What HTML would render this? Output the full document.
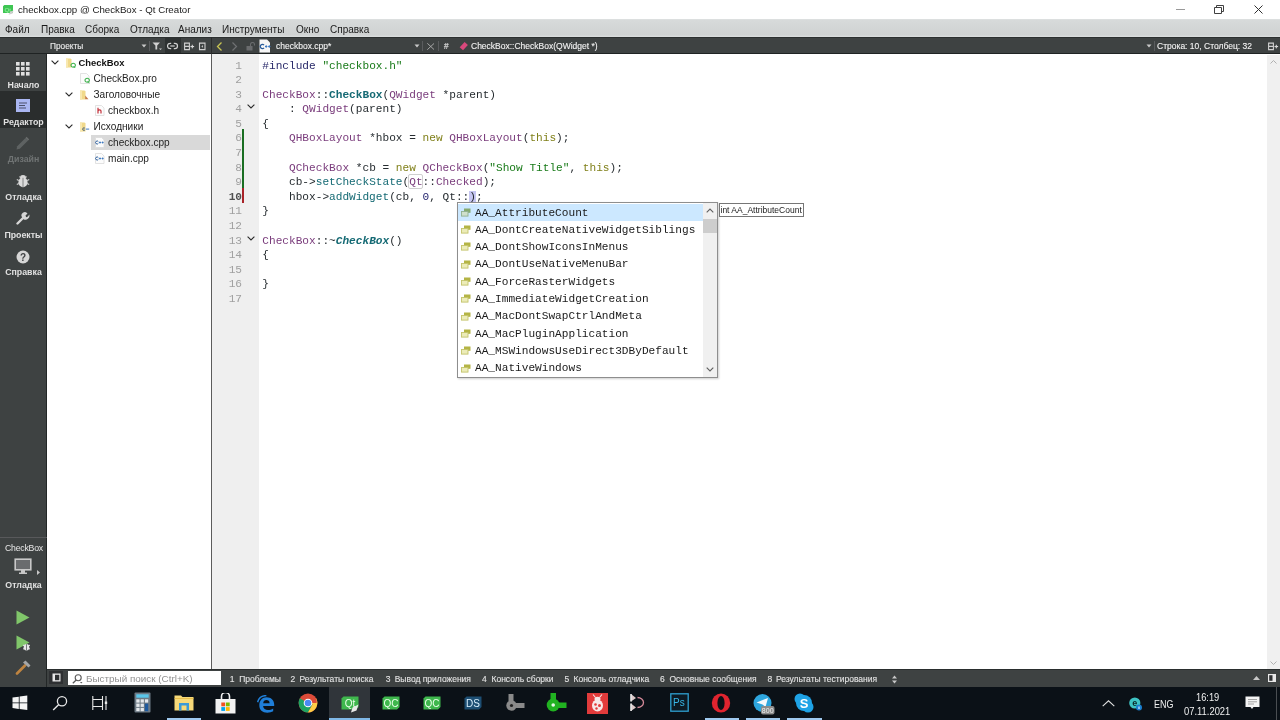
<!DOCTYPE html>
<html><head><meta charset="utf-8">
<style>
*{margin:0;padding:0;box-sizing:border-box}
html,body{width:1280px;height:720px;overflow:hidden;background:#fff;font-family:"Liberation Sans",sans-serif;position:relative}
body{will-change:transform}
.a{position:absolute;white-space:pre}
#title{left:0;top:0;width:1280px;height:19px;background:#fff}
#menu{left:0;top:19px;width:1280px;height:18px;background:linear-gradient(#dfe2e2 0,#d7dada 8%,#cfd2d2 88%,#dcdfdf 100%)}
#menu span{position:absolute;top:4.5px;font-size:10px;color:#1a1a1a}
#tb{left:0;top:37px;width:1280px;height:17px;background:#3e4242;box-shadow:inset 0 1px 0 #2c3030,inset 0 -1px 0 #1f2323}
#mode{left:0;top:54px;width:47px;height:633px;background:#3e4242;box-shadow:inset -1px 0 0 #232727}
#tree{left:47px;top:54px;width:164px;height:616px;background:#fff}
#vsep{left:211px;top:54px;width:1px;height:615px;background:#5c5c5c}
#gutter{left:212px;top:54px;width:47px;height:616px;background:#efefef}
#code{left:259px;top:54px;width:1008px;height:616px;background:#fff}
#vscroll{left:1267px;top:55px;width:13px;height:614px;background:#f0f0f0}
#obar{left:47px;top:669px;width:1233px;height:18px;background:#3e4242;box-shadow:inset 0 1px 0 #2a2e2e}
#task{left:0;top:687px;width:1280px;height:33px;background:#0b1117}
.code{font-family:"Liberation Mono",monospace;font-size:11.1px;line-height:14.6px}
.ln{position:absolute;right:0;width:30px;text-align:right;color:#9a9a9a}

.ed{position:absolute;font-family:"Liberation Mono",monospace;font-size:11.14px;line-height:14.6px;white-space:pre;color:#262c30}
#lnums{left:212px;top:58.5px;width:30px;text-align:right;color:#a0a0a0}
#lines{left:262.3px;top:58.5px}
.pp{color:#2a2a6a}.st{color:#187a18}.ty{color:#7a3c7c}.fn{color:#156a74}.kw{color:#80801a}.nm{color:#24246e}.b{font-weight:bold}.i{font-style:italic}

.ml{position:absolute;left:0;width:47px;text-align:center;font-size:8.8px;font-weight:bold;color:#e0e0e0}

.tr{position:absolute;font-size:10.1px;color:#1e1e1e;white-space:pre}

#pop{left:457px;top:202px;width:261px;height:176px;background:#fff;border:1px solid #8e8e8e;box-shadow:1px 1px 2px rgba(0,0,0,0.2)}
#pop .it{position:absolute;left:17px;font-family:"Liberation Mono",monospace;font-size:11.14px;line-height:17.33px;white-space:pre;color:#1a1a1a}

.ob{position:absolute;top:4px;font-size:8.5px;color:#e2e2e2;white-space:pre}

#tb span,.ob{-webkit-text-stroke:0.12px currentColor}
</style></head><body>
<div id="title" class="a">
<svg class="a" style="left:3px;top:5px" width="11" height="10" viewBox="0 0 11 10"><path d="M1.3 0H10V8H0V1.3Z" fill="#3ec553"/><text x="1.5" y="6.6" font-size="6.2" font-family="Liberation Sans" fill="#9ff5a8">Qt</text><path d="M5.5 9.5L7.5 6.5L10.5 5.5L9.5 8.5L6.5 9.6Z" fill="#cfcfcf"/></svg>
<span class="a" style="left:18px;top:4.2px;font-size:9.7px;color:#1a1a1a">checkbox.cpp @ CheckBox - Qt Creator</span>
<div class="a" style="left:1176px;top:9px;width:9px;height:1px;background:#999"></div>
<svg class="a" style="left:1214px;top:5px" width="10" height="9" viewBox="0 0 10 9"><path d="M0.5 2.5H7.5V8.5H0.5Z M2.5 2.5V0.5H9.5V6.5H7.5" fill="none" stroke="#404040" stroke-width="1"/></svg>
<svg class="a" style="left:1254px;top:5px" width="9" height="9" viewBox="0 0 9 9"><path d="M0.5 0.5L8.5 8.5M8.5 0.5L0.5 8.5" stroke="#303030" stroke-width="1"/></svg>
</div>
<div id="menu" class="a">
<span style="left:5px">Файл</span><span style="left:41px">Правка</span><span style="left:85px">Сборка</span><span style="left:130px">Отладка</span><span style="left:178px">Анализ</span><span style="left:222px">Инструменты</span><span style="left:296px">Окно</span><span style="left:330px">Справка</span>
</div>
<div id="tb" class="a">
<span class="a" style="left:50px;top:3.5px;font-size:8.3px;color:#ececec">Проекты</span>
<svg class="a" style="left:141px;top:7px" width="6" height="4"><path d="M0.5 0.5H5.5L3 3.5Z" fill="#c8c8c8"/></svg>
<div class="a" style="left:149px;top:4px;width:1px;height:10px;background:#5a5c5e"></div>
<svg class="a" style="left:152px;top:5px" width="11" height="9" viewBox="0 0 11 9"><path d="M0.5 0.5H8L5.2 3.6V7.5H3.4V3.6Z" fill="#d0d0d0"/><path d="M7 6.5H10L8.5 8Z" fill="#d0d0d0"/></svg>
<div class="a" style="left:165px;top:1px;width:15.5px;height:15px;background:#2d3131"></div>
<svg class="a" style="left:167px;top:5px" width="12" height="8" viewBox="0 0 12 8"><path d="M4.2 1.3H3.2A2.7 2.7 0 0 0 3.2 6.7H4.2M6.8 1.3H7.8A2.7 2.7 0 0 1 7.8 6.7H6.8" fill="none" stroke="#d0d0d0" stroke-width="1.2"/><path d="M3.3 4H7.7" stroke="#c8c8c8" stroke-width="1.3"/></svg>
<svg class="a" style="left:183px;top:5px" width="12" height="9" viewBox="0 0 12 9"><path d="M1.6 1.1H6.4V7.6H1.6Z M1.6 4.35H6.4" fill="none" stroke="#d0d0d0" stroke-width="1.1"/><rect x="7.5" y="4" width="3.6" height="1.1" fill="#d8d8d8"/><rect x="8.75" y="2.75" width="1.1" height="3.6" fill="#d8d8d8"/></svg>
<svg class="a" style="left:198px;top:5px" width="8" height="9" viewBox="0 0 8 9"><path d="M1.5 1.1H7V7.6H1.5Z" fill="none" stroke="#d0d0d0" stroke-width="1.1"/><path d="M5 3V5.8L3.3 4.4Z" fill="#c0c0c0"/></svg>
<div class="a" style="left:211px;top:0;width:1px;height:17px;background:#2a2b2c"></div>
<svg class="a" style="left:216px;top:5px" width="7" height="9" viewBox="0 0 7 9"><path d="M5.5 0.5L1.5 4.5L5.5 8.5" fill="none" stroke="#c9c552" stroke-width="1.3"/></svg>
<svg class="a" style="left:231px;top:5px" width="7" height="9" viewBox="0 0 7 9"><path d="M1.5 0.5L5.5 4.5L1.5 8.5" fill="none" stroke="#707274" stroke-width="1.2"/></svg>
<svg class="a" style="left:246px;top:5px" width="10" height="9" viewBox="0 0 10 9"><rect x="0.5" y="4" width="6" height="4.5" fill="#6a6c6e"/><path d="M4.5 4.2V2.5A2 2 0 0 1 8.5 2.5V3.5" fill="none" stroke="#6a6c6e" stroke-width="1.1"/></svg>
<svg class="a" style="left:259px;top:2px" width="13" height="14" viewBox="0 0 13 14"><path d="M0.5 0.5H8L11 3.5V13.5H0.5Z" fill="#f6f6f6"/><path d="M5 6.2A2.1 2.1 0 1 0 5 8.8" fill="none" stroke="#2a5c9a" stroke-width="1.3"/><path d="M6 7.5H8.4M7.2 6.3V8.7M9.1 7.5H11.5M10.3 6.3V8.7" stroke="#3c78c0" stroke-width="1.1"/></svg>
<span class="a" style="left:276px;top:3.5px;font-size:8.5px;color:#f2f2f2">checkbox.cpp*</span>
<svg class="a" style="left:414px;top:7px" width="6" height="4"><path d="M0.5 0.5H5.5L3 3.5Z" fill="#c8c8c8"/></svg>
<div class="a" style="left:422px;top:4px;width:1px;height:10px;background:#5a5c5e"></div>
<svg class="a" style="left:426.7px;top:5.5px" width="7.5" height="7" viewBox="0 0 7.5 7"><path d="M0.3 0.3L7.2 6.7M7.2 0.3L0.3 6.7" stroke="#b0b0b0" stroke-width="0.9"/></svg>
<div class="a" style="left:438px;top:4px;width:1px;height:10px;background:#5a5c5e"></div>
<span class="a" style="left:443.8px;top:3.6px;font-size:8.6px;color:#d4d4d4;font-weight:bold;font-style:italic">#</span>
<svg class="a" style="left:459px;top:4px" width="10" height="10" viewBox="0 0 10 10"><path d="M0.7 6.2L5.6 1L8.9 4.1L4 9.3Z" fill="#d9487c"/></svg>
<span class="a" style="left:471px;top:3.5px;font-size:8.5px;color:#f2f2f2">CheckBox::CheckBox(QWidget *)</span>
<svg class="a" style="left:1146px;top:7px" width="6" height="4"><path d="M0.5 0.5H5.5L3 3.5Z" fill="#c8c8c8"/></svg>
<div class="a" style="left:1154px;top:4px;width:1px;height:10px;background:#5a5c5e"></div>
<span class="a" style="left:1157px;top:3.5px;font-size:8.5px;color:#f2f2f2">Строка: 10, Столбец: 32</span>
<svg class="a" style="left:1267px;top:5px" width="12" height="9" viewBox="0 0 12 9"><path d="M1.6 1.1H6.4V7.6H1.6Z M1.6 4.35H6.4" fill="none" stroke="#d0d0d0" stroke-width="1.1"/><rect x="7.5" y="4" width="3.6" height="1.1" fill="#d8d8d8"/><rect x="8.75" y="2.75" width="1.1" height="3.6" fill="#d8d8d8"/></svg>
</div>
<div id="mode" class="a">
<svg class="a" style="left:16px;top:7.8px" width="14" height="14" viewBox="0 0 14 14"><rect x="0" y="0" width="3.6" height="3.6" fill="#e0e0e0"/><rect x="0" y="5" width="3.6" height="3.6" fill="#e0e0e0"/><rect x="0" y="10" width="3.6" height="3.6" fill="#e0e0e0"/><rect x="5" y="0" width="3.6" height="3.6" fill="#e0e0e0"/><rect x="5" y="5" width="3.6" height="3.6" fill="#e0e0e0"/><rect x="5" y="10" width="3.6" height="3.6" fill="#e0e0e0"/><rect x="10" y="0" width="3.6" height="3.6" fill="#e0e0e0"/><rect x="10" y="5" width="3.6" height="3.6" fill="#e0e0e0"/><rect x="10" y="10" width="3.6" height="3.6" fill="#e0e0e0"/></svg>
<div class="ml" style="top:25.5px">Начало</div>
<div class="a" style="left:0;top:37px;width:46px;height:37px;background:#2a2d2d"></div>
<svg class="a" style="left:16px;top:45px" width="14" height="13" viewBox="0 0 14 13"><rect x="0" y="0" width="14" height="13" fill="#aab6f2"/><path d="M3 4H11M3 6.5H9M3 9H10" stroke="#4a4f6a" stroke-width="1.2"/></svg>
<div class="ml" style="top:63px">Редактор</div>
<svg class="a" style="left:13.8px;top:82px" width="16" height="15" viewBox="0 0 16 15"><path d="M2.5 13.5L3.2 10.2L11.5 1.9L14.1 4.5L5.8 12.8Z" fill="#5e6262"/><path d="M11.5 1.9L12.6 0.8L15.2 3.4L14.1 4.5Z" fill="#6a6e6e"/></svg>
<div class="ml" style="top:99.8px;color:#707474">Дизайн</div>
<svg class="a" style="left:16px;top:119px" width="14" height="15" viewBox="0 0 14 15"><path d="M0.8 6.5L2.8 7.5M0.8 11.5L2.8 10.5M13.2 6.5L11.2 7.5M13.2 11.5L11.2 10.5M3.5 3.5L4.8 4.8M10.5 3.5L9.2 4.8" stroke="#d0d0d0" stroke-width="1.1"/><ellipse cx="7" cy="4" rx="2.8" ry="2" fill="#d8d8d8"/><ellipse cx="7" cy="9.3" rx="4.6" ry="5" fill="#dcdcdc"/><path d="M7 4.8V14.2" stroke="#8a8c8c" stroke-width="1.1"/></svg>
<div class="ml" style="top:138px">Отладка</div>
<svg class="a" style="left:16px;top:157px" width="14" height="14" viewBox="0 0 14 14"><path d="M1.5 12.5L7 7" stroke="#d6d6d6" stroke-width="2.4" stroke-linecap="round"/><path d="M6.2 6.5A3.3 3.3 0 1 1 11.5 2.5L9.5 4.5L10.2 6.2L11.9 5.6L13.3 3.6A4 4 0 0 1 7.5 8.2Z" fill="#d6d6d6"/></svg>
<div class="ml" style="top:175.5px">Проекты</div>
<svg class="a" style="left:16px;top:196px" width="14" height="14" viewBox="0 0 14 14"><circle cx="7" cy="7" r="6.5" fill="#d6d6d6"/><text x="7" y="10.8" text-anchor="middle" font-size="10" font-weight="bold" font-family="Liberation Sans" fill="#404244">?</text></svg>
<div class="ml" style="top:213px">Справка</div>
<div class="a" style="left:0;top:483px;width:47px;height:1px;background:#58595b"></div>
<div class="ml" style="top:489.2px;left:0.5px;font-weight:normal;font-size:8.7px;color:#e8e8e8;letter-spacing:-0.2px">CheckBox</div>
<svg class="a" style="left:14px;top:504px" width="18" height="17" viewBox="0 0 18 17"><rect x="1.2" y="1.2" width="15.6" height="10.6" fill="#6a6c6e" stroke="#c8c8c8" stroke-width="1.6"/><path d="M7 12V14.5H5V16H13V14.5H11V12Z" fill="#c8c8c8"/></svg>
<svg class="a" style="left:37px;top:515.5px" width="3" height="5"><path d="M0 0L3 2.5L0 5Z" fill="#c8c8c8"/></svg>
<div class="ml" style="top:525.5px">Отладка</div>
<svg class="a" style="left:16px;top:556px" width="14" height="15" viewBox="0 0 14 15"><path d="M0.5 0.5L13.5 7.5L0.5 14.5Z" fill="#80c66a"/></svg>
<svg class="a" style="left:16px;top:581px" width="15" height="16" viewBox="0 0 15 16"><path d="M0.5 0.5L13.5 7.5L0.5 14.5Z" fill="#80c66a"/><path d="M7 10L8.5 11M7 14L8.5 13.5M14 10L12.5 11M14 14L12.5 13.5" stroke="#e8e8e8" stroke-width="1"/><ellipse cx="10.5" cy="12.3" rx="2.8" ry="3.3" fill="#e8e8e8"/><path d="M10.5 9.2V15.5" stroke="#6a6e6e" stroke-width="0.9"/></svg>
<svg class="a" style="left:15px;top:606px" width="17" height="15" viewBox="0 0 17 15"><path d="M2 13.5L10 5.5" stroke="#bf8440" stroke-width="2.6" stroke-linecap="round"/><path d="M8 2.5L10.5 0.5L15.5 5.5L13.5 7.5Z" fill="#a4a6a8"/></svg>
</div>
<div id="tree" class="a">
<div class="a" style="left:44px;top:80.5px;width:119px;height:15px;background:#d9d9d9"></div>
<svg class="a" style="left:3.5px;top:6px" width="8" height="5" viewBox="0 0 8 5"><path d="M0.6 0.6L4 4L7.4 0.6" fill="none" stroke="#2a2a2a" stroke-width="1.1"/></svg>
<svg class="a" style="left:18.5px;top:4px" width="10" height="10" viewBox="0 0 10 10"><path d="M0 0.5H4.5L5.5 1.5V9.5H0Z" fill="#f1d98a"/><path d="M0 0.5H2V9.5H0Z" fill="#f8e8b0"/><path d="M5 7.2A2.2 2 0 1 1 9.4 7.2A2.2 2 0 1 1 5 7.2Z" fill="none" stroke="#3fb34f" stroke-width="1.1"/><path d="M7.5 8.5L9.5 10" stroke="#3fb34f" stroke-width="1"/></svg>
<div class="tr" style="left:31.5px;top:2.5px;font-weight:bold;font-size:9.4px;color:#111">CheckBox</div>
<svg class="a" style="left:33px;top:19px" width="10" height="11" viewBox="0 0 10 11"><path d="M0.5 0.5H6.5L9 3V10.5H0.5Z" fill="#fcfcfc" stroke="#dadada" stroke-width="0.8"/><path d="M5 7.2A2.2 2 0 1 1 9.4 7.2A2.2 2 0 1 1 5 7.2Z" fill="none" stroke="#3fb34f" stroke-width="1.1"/><path d="M7.5 8.5L9.5 10" stroke="#3fb34f" stroke-width="1"/></svg>
<div class="tr" style="left:46.5px;top:18.5px">CheckBox.pro</div>
<svg class="a" style="left:18px;top:38px" width="8" height="5" viewBox="0 0 8 5"><path d="M0.6 0.6L4 4L7.4 0.6" fill="none" stroke="#2a2a2a" stroke-width="1.1"/></svg>
<svg class="a" style="left:33px;top:36px" width="10" height="10" viewBox="0 0 10 10"><path d="M0 0.5H4.5L5.5 1.5V9.5H0Z" fill="#f1d98a"/><path d="M0 0.5H2V9.5H0Z" fill="#f8e8b0"/><path d="M5.2 5.5L8.5 9.2H5.2Z" fill="#c47a4a"/></svg>
<div class="tr" style="left:46.5px;top:34.5px">Заголовочные</div>
<svg class="a" style="left:48px;top:51px" width="10" height="11" viewBox="0 0 10 11"><path d="M0.5 0.5H6.5L9 3V10.5H0.5Z" fill="#fcfcfc" stroke="#dadada" stroke-width="0.8"/><path d="M3 2.8V8.5M3 5.8Q3.2 4.8 4.6 4.8Q6 4.8 6 6V8.5" fill="none" stroke="#c4303a" stroke-width="1.2"/></svg>
<div class="tr" style="left:61px;top:50.5px">checkbox.h</div>
<svg class="a" style="left:18px;top:70px" width="8" height="5" viewBox="0 0 8 5"><path d="M0.6 0.6L4 4L7.4 0.6" fill="none" stroke="#2a2a2a" stroke-width="1.1"/></svg>
<svg class="a" style="left:33px;top:68px" width="10" height="10" viewBox="0 0 10 10"><path d="M0 0.5H4.5L5.5 1.5V9.5H0Z" fill="#f1d98a"/><path d="M0 0.5H2V9.5H0Z" fill="#f8e8b0"/><path d="M4.9 6.2A1.3 1.3 0 1 0 4.9 8" fill="none" stroke="#3a5a80" stroke-width="0.9"/><path d="M5.8 7.1H9.2" stroke="#3c78c0" stroke-width="1"/></svg>
<div class="tr" style="left:46.5px;top:66.5px">Исходники</div>
<svg class="a" style="left:48px;top:83px" width="10" height="11" viewBox="0 0 10 11"><path d="M0.5 0.5H6.5L9 3V10.5H0.5Z" fill="#fcfcfc" stroke="#dadada" stroke-width="0.8"/><path d="M3.3 4.6A1.5 1.5 0 1 0 3.3 6.4" fill="none" stroke="#2a5c9a" stroke-width="1"/><path d="M4 5.5H6M5 4.5V6.5M6.6 5.5H8.6M7.6 4.5V6.5" stroke="#3c78c0" stroke-width="0.9"/></svg>
<div class="tr" style="left:61px;top:82.5px">checkbox.cpp</div>
<svg class="a" style="left:48px;top:99px" width="10" height="11" viewBox="0 0 10 11"><path d="M0.5 0.5H6.5L9 3V10.5H0.5Z" fill="#fcfcfc" stroke="#dadada" stroke-width="0.8"/><path d="M3.3 4.6A1.5 1.5 0 1 0 3.3 6.4" fill="none" stroke="#2a5c9a" stroke-width="1"/><path d="M4 5.5H6M5 4.5V6.5M6.6 5.5H8.6M7.6 4.5V6.5" stroke="#3c78c0" stroke-width="0.9"/></svg>
<div class="tr" style="left:61px;top:98.5px">main.cpp</div>
</div>
</div>
<div id="vsep" class="a"></div>
<div id="gutter" class="a"></div>
<div id="code" class="a"></div>
<div class="a" style="left:242.4px;top:129.2px;width:1.6px;height:58.5px;background:#1a6e22"></div>
<div class="a" style="left:242.4px;top:187.7px;width:1.6px;height:15.6px;background:#a82228"></div>
<svg class="a" style="left:246.5px;top:104px" width="8" height="5" viewBox="0 0 8 5"><path d="M0.6 0.6L4 4L7.4 0.6" fill="none" stroke="#2a2a2a" stroke-width="1.1"/></svg>
<svg class="a" style="left:246.5px;top:236px" width="8" height="5" viewBox="0 0 8 5"><path d="M0.6 0.6L4 4L7.4 0.6" fill="none" stroke="#2a2a2a" stroke-width="1.1"/></svg>
<div class="a" style="left:408px;top:173.5px;width:14.5px;height:15.5px;border:1px solid #cfcfcf;border-radius:2px"></div>
<div id="lnums" class="ed">1
2
3
4
5
6
7
8
9
<b style="color:#505050">10</b>
11
12
13
14
15
16
17</div>
<div id="lines" class="ed"><span class="pp">#include</span> <span class="st">"checkbox.h"</span>

<span class="ty">CheckBox</span>::<span class="fn b">CheckBox</span>(<span class="ty">QWidget</span> *parent)
    : <span class="ty">QWidget</span>(parent)
{
    <span class="ty">QHBoxLayout</span> *hbox = <span class="kw">new</span> <span class="ty">QHBoxLayout</span>(<span class="kw">this</span>);

    <span class="ty">QCheckBox</span> *cb = <span class="kw">new</span> <span class="ty">QCheckBox</span>(<span class="st">"Show Title"</span>, <span class="kw">this</span>);
    cb-&gt;<span class="fn">setCheckState</span>(<span class="ty">Qt</span>::<span class="ty">Checked</span>);
    hbox-&gt;<span class="fn">addWidget</span>(cb, <span class="nm">0</span>, Qt::<span style="background:#c6c6f2">)</span>;
}

<span class="ty">CheckBox</span>::~<span class="fn b i">CheckBox</span>()
{

}
</div>
<div id="pop" class="a">
<div class="a" style="left:0;top:0.5px;width:245px;height:17px;background:#cce8ff"></div>

<svg class="a" style="left:3px;top:4.80px" width="10" height="9" viewBox="0 0 10 9"><rect x="3" y="0.5" width="6.5" height="4.3" fill="#86aa70"/><rect x="0.5" y="3.5" width="6.5" height="4.6" fill="#cfe0cc" stroke="#90b090" stroke-width="0.9"/></svg><svg class="a" style="left:3px;top:22.13px" width="10" height="9" viewBox="0 0 10 9"><rect x="3" y="0.5" width="6.5" height="4.3" fill="#b4b444"/><rect x="0.5" y="3.5" width="6.5" height="4.6" fill="#ececb8" stroke="#c4c46a" stroke-width="0.9"/></svg><svg class="a" style="left:3px;top:39.46px" width="10" height="9" viewBox="0 0 10 9"><rect x="3" y="0.5" width="6.5" height="4.3" fill="#b4b444"/><rect x="0.5" y="3.5" width="6.5" height="4.6" fill="#ececb8" stroke="#c4c46a" stroke-width="0.9"/></svg><svg class="a" style="left:3px;top:56.79px" width="10" height="9" viewBox="0 0 10 9"><rect x="3" y="0.5" width="6.5" height="4.3" fill="#b4b444"/><rect x="0.5" y="3.5" width="6.5" height="4.6" fill="#ececb8" stroke="#c4c46a" stroke-width="0.9"/></svg><svg class="a" style="left:3px;top:74.12px" width="10" height="9" viewBox="0 0 10 9"><rect x="3" y="0.5" width="6.5" height="4.3" fill="#b4b444"/><rect x="0.5" y="3.5" width="6.5" height="4.6" fill="#ececb8" stroke="#c4c46a" stroke-width="0.9"/></svg><svg class="a" style="left:3px;top:91.45px" width="10" height="9" viewBox="0 0 10 9"><rect x="3" y="0.5" width="6.5" height="4.3" fill="#b4b444"/><rect x="0.5" y="3.5" width="6.5" height="4.6" fill="#ececb8" stroke="#c4c46a" stroke-width="0.9"/></svg><svg class="a" style="left:3px;top:108.78px" width="10" height="9" viewBox="0 0 10 9"><rect x="3" y="0.5" width="6.5" height="4.3" fill="#b4b444"/><rect x="0.5" y="3.5" width="6.5" height="4.6" fill="#ececb8" stroke="#c4c46a" stroke-width="0.9"/></svg><svg class="a" style="left:3px;top:126.11px" width="10" height="9" viewBox="0 0 10 9"><rect x="3" y="0.5" width="6.5" height="4.3" fill="#b4b444"/><rect x="0.5" y="3.5" width="6.5" height="4.6" fill="#ececb8" stroke="#c4c46a" stroke-width="0.9"/></svg><svg class="a" style="left:3px;top:143.44px" width="10" height="9" viewBox="0 0 10 9"><rect x="3" y="0.5" width="6.5" height="4.3" fill="#b4b444"/><rect x="0.5" y="3.5" width="6.5" height="4.6" fill="#ececb8" stroke="#c4c46a" stroke-width="0.9"/></svg><svg class="a" style="left:3px;top:160.77px" width="10" height="9" viewBox="0 0 10 9"><rect x="3" y="0.5" width="6.5" height="4.3" fill="#b4b444"/><rect x="0.5" y="3.5" width="6.5" height="4.6" fill="#ececb8" stroke="#c4c46a" stroke-width="0.9"/></svg><div class="it" style="top:1.5px">AA_AttributeCount<br>AA_DontCreateNativeWidgetSiblings<br>AA_DontShowIconsInMenus<br>AA_DontUseNativeMenuBar<br>AA_ForceRasterWidgets<br>AA_ImmediateWidgetCreation<br>AA_MacDontSwapCtrlAndMeta<br>AA_MacPluginApplication<br>AA_MSWindowsUseDirect3DByDefault<br>AA_NativeWindows</div>
<div class="a" style="left:245px;top:0;width:14px;height:174px;background:#f0f0f0"></div>
<div class="a" style="left:245px;top:15.5px;width:14px;height:14px;background:#cdcdcd"></div>
<svg class="a" style="left:248px;top:5px" width="8" height="5" viewBox="0 0 8 5"><path d="M0.7 4.3L4 1L7.3 4.3" fill="none" stroke="#606060" stroke-width="1.1"/></svg>
<svg class="a" style="left:248px;top:164px" width="8" height="5" viewBox="0 0 8 5"><path d="M0.7 0.7L4 4L7.3 0.7" fill="none" stroke="#606060" stroke-width="1.1"/></svg>
</div>
<div class="a" style="left:719px;top:203px;width:85px;height:14px;background:#fff;border:1px solid #767676"></div>
<span class="a" style="left:720.5px;top:204.5px;font-size:8.5px;color:#1a1a1a">int AA_AttributeCount</span>
<div id="vscroll" class="a">
<svg class="a" style="left:3px;top:5px" width="7" height="4" viewBox="0 0 7 4"><path d="M0.5 3.5L3.5 0.5L6.5 3.5" fill="none" stroke="#b0b0b0" stroke-width="1"/></svg>
<svg class="a" style="left:3px;top:605.5px" width="7" height="4" viewBox="0 0 7 4"><path d="M0.5 0.5L3.5 3.5L6.5 0.5" fill="none" stroke="#b0b0b0" stroke-width="1"/></svg>
</div>
<div id="obar" class="a"><div class="a" style="left:0;top:1px;width:1233px;height:17px">
<div class="a" style="left:2px;top:1px;width:14px;height:13px;background:#2e3032"></div>
<svg class="a" style="left:4.5px;top:3px" width="9" height="9" viewBox="0 0 9 9"><rect x="0.5" y="0.5" width="8" height="8" fill="#e8e8e8"/><rect x="3" y="1.8" width="4.3" height="5.4" fill="#2e3032"/></svg>
<div class="a" style="left:21px;top:1px;width:153px;height:14px;background:#fff"></div>
<svg class="a" style="left:25px;top:3.5px" width="11" height="10" viewBox="0 0 11 10"><circle cx="6.2" cy="3.8" r="3" fill="none" stroke="#5a5a5a" stroke-width="1.1"/><path d="M4.2 6L0.8 9.2" stroke="#5a5a5a" stroke-width="1.3"/><path d="M8 8H10.5L9.25 9.5Z" fill="#5a5a5a"/></svg>
<span class="a" style="left:39px;top:2.5px;font-size:9.9px;color:#909090">Быстрый поиск (Ctrl+K)</span>
<span class="ob" style="left:182.7px">1</span><span class="ob" style="left:192.2px">Проблемы</span><span class="ob" style="left:243.6px">2</span><span class="ob" style="left:252.4px">Результаты поиска</span><span class="ob" style="left:338.8px">3</span><span class="ob" style="left:347.7px">Вывод приложения</span><span class="ob" style="left:435.1px">4</span><span class="ob" style="left:444.5px">Консоль сборки</span><span class="ob" style="left:517.6px">5</span><span class="ob" style="left:526.5px">Консоль отладчика</span><span class="ob" style="left:613.1px">6</span><span class="ob" style="left:622.5px">Основные сообщения</span><span class="ob" style="left:720.4px">8</span><span class="ob" style="left:728.9px">Результаты тестирования</span>
<svg class="a" style="left:844.5px;top:5px" width="5" height="9" viewBox="0 0 5 9"><path d="M0 3.5L2.5 0.5L5 3.5Z M0 5.5L2.5 8.5L5 5.5Z" fill="#c8c8c8"/></svg>
<svg class="a" style="left:1206px;top:6px" width="7" height="4" viewBox="0 0 7 4"><path d="M0 4L3.5 0L7 4Z" fill="#c8c8c8"/></svg>
<svg class="a" style="left:1221px;top:4px" width="8" height="8" viewBox="0 0 8 8"><rect x="0.6" y="0.6" width="6.8" height="6.8" fill="#2e3032" stroke="#e8e8e8" stroke-width="1.2"/><rect x="4.5" y="1" width="3" height="6" fill="#e8e8e8"/></svg>
</div></div>
<div id="task" class="a">
<svg class="a" style="left:12px;top:8px" width="16" height="16" viewBox="0 0 16 16"><path d="M0.5 2.6L6.8 1.7V7.4H0.5Z M7.6 1.6L15.3 0.6V7.4H7.6Z M0.5 8.2H6.8V13.9L0.5 13Z M7.6 8.2H15.3V15L7.6 14Z" fill="#f4f4f4"/></svg>
<svg class="a" style="left:52px;top:8px" width="16" height="16" viewBox="0 0 16 16"><circle cx="10" cy="6.2" r="4.6" fill="none" stroke="#e8e8e8" stroke-width="1.3"/><path d="M6.8 9.5L1.2 15" stroke="#e8e8e8" stroke-width="1.4"/></svg>
<svg class="a" style="left:92px;top:8px" width="16" height="16" viewBox="0 0 16 16"><path d="M0.8 1V15M10.5 1V15M0.8 4.5H10.5M0.8 11.5H10.5M14 1V15" stroke="#e8e8e8" stroke-width="1.1" fill="none"/><rect x="12.8" y="6.5" width="2.4" height="2.5" fill="#e8e8e8"/></svg>
<svg class="a" style="left:134px;top:5px" width="17" height="21" viewBox="0 0 17 21"><rect x="0.5" y="0.5" width="16" height="20" rx="1" fill="#6d7a85"/><rect x="2.3" y="2.3" width="12.4" height="3.4" fill="#5ac6ea"/><rect x="2.3" y="7.3" width="3.3" height="3.3" fill="#e4e8ec"/><rect x="6.6" y="7.3" width="3.3" height="3.3" fill="#e4e8ec"/><rect x="2.3" y="11.6" width="3.3" height="3.3" fill="#e4e8ec"/><rect x="6.6" y="11.6" width="3.3" height="3.3" fill="#e4e8ec"/><rect x="2.3" y="15.899999999999999" width="3.3" height="3.3" fill="#e4e8ec"/><rect x="6.6" y="15.899999999999999" width="3.3" height="3.3" fill="#e4e8ec"/><rect x="10.9" y="7.3" width="3.3" height="3.3" fill="#e4e8ec"/><rect x="10.9" y="11.6" width="3.3" height="7.6" fill="#1f5a9e"/></svg>
<svg class="a" style="left:174px;top:7px" width="20" height="17" viewBox="0 0 20 17"><path d="M0.5 1.5H7L8.5 3H19.5V16.5H0.5Z" fill="#f6d979"/><path d="M0.5 4.5H19.5" stroke="#e4b840" stroke-width="0.8"/><path d="M5 9H15V16.5H12.5V11.5H7.5V16.5H5Z" fill="#3a9ad8"/></svg>
<div class="a" style="left:167px;top:31px;width:34px;height:2px;background:#9fc9ef"></div>
<svg class="a" style="left:215px;top:6px" width="21" height="21" viewBox="0 0 21 21"><path d="M6.5 6V3.5A4 4 0 0 1 14.5 3.5V6" fill="none" stroke="#f0f0f0" stroke-width="1.6"/><rect x="0.5" y="6" width="20" height="14.5" fill="#f2f2f2"/><rect x="6.3" y="9.5" width="3.8" height="3.8" fill="#f25022"/><rect x="10.9" y="9.5" width="3.8" height="3.8" fill="#7fba00"/><rect x="6.3" y="14.1" width="3.8" height="3.8" fill="#00a4ef"/><rect x="10.9" y="14.1" width="3.8" height="3.8" fill="#ffb900"/></svg>
<svg class="a" style="left:257px;top:8px" width="19" height="18" viewBox="0 0 19 18"><path d="M9.5 2.2C13.8 2.2 17.2 4.9 17.2 9.6V10.9H6.1C6.3 13.6 8.4 14.9 11 14.9C13 14.9 14.6 14.4 16.2 13.4V16.3C14.6 17.2 12.6 17.7 10.4 17.7C5.4 17.7 2.3 14.9 2.3 10.2C2.3 5.6 5.3 2.2 9.5 2.2ZM9.3 5.1C7.6 5.1 6.4 6.3 6.2 8.2H12.6C12.6 6.3 11.4 5.1 9.3 5.1Z" fill="#1f7ed8"/><path d="M0.6 7.2C1.6 3.2 5 0.6 9.4 0.6" fill="none" stroke="#1f7ed8" stroke-width="1.5"/></svg>
<svg class="a" style="left:298px;top:6px" width="20" height="20" viewBox="0 0 20 20"><circle cx="10" cy="10" r="9.4" fill="#dd4b39"/><path d="M10 10L1.9 5.3A9.4 9.4 0 0 0 10 19.4L14.7 11.3Z" fill="#1da462"/><path d="M10 10L18.1 5.3A9.4 9.4 0 0 1 10 19.4L14.7 11.3Z" fill="#ffcd46"/><path d="M10 10H18.6A9.4 9.4 0 0 0 18.1 5.3H10Z" fill="#dd4b39"/><circle cx="10" cy="10" r="4.3" fill="#fff"/><circle cx="10" cy="10" r="3.3" fill="#4a8af4"/></svg>
<div class="a" style="left:329px;top:0;width:41px;height:31px;background:#30353a"></div>
<div class="a" style="left:329px;top:31px;width:41px;height:2px;background:#7fb8e6"></div>
<svg class="a" style="left:341px;top:9px" width="18" height="14" viewBox="0 0 18 14"><path d="M2.5 0.5H17.5V11L15 13.5H0.5V2.5Z" fill="#3fb74d"/><text x="9" y="10.8" text-anchor="middle" font-size="10" font-family="Liberation Sans" fill="#e8ffe8">Qt</text></svg>
<svg class="a" style="left:350px;top:17px" width="9" height="9" viewBox="0 0 9 9"><path d="M1 8.5L2.5 3.5L8.5 0.5L6.5 6.5Z" fill="#e8e8e8"/></svg>
<svg class="a" style="left:382px;top:9px" width="18" height="14" viewBox="0 0 18 14"><path d="M2.5 0.5H17.5V11L15 13.5H0.5V2.5Z" fill="#3fb74d"/><text x="9" y="10.8" text-anchor="middle" font-size="10" font-family="Liberation Sans" fill="#e8ffe8">QC</text></svg>
<svg class="a" style="left:423px;top:9px" width="18" height="14" viewBox="0 0 18 14"><path d="M2.5 0.5H17.5V11L15 13.5H0.5V2.5Z" fill="#3fb74d"/><text x="9" y="10.8" text-anchor="middle" font-size="10" font-family="Liberation Sans" fill="#e8ffe8">QC</text></svg>
<svg class="a" style="left:464px;top:9px" width="18" height="14" viewBox="0 0 18 14"><path d="M2.5 0.5H17.5V11L15 13.5H0.5V2.5Z" fill="#1d4e73"/><text x="9" y="10.8" text-anchor="middle" font-size="10" font-family="Liberation Sans" fill="#d8eefc">DS</text></svg>
<svg class="a" style="left:506px;top:7px" width="19" height="18" viewBox="0 0 19 18"><rect x="2.5" y="0" width="5" height="7" fill="#8a8a8a"/><rect x="9" y="9" width="9.5" height="5" fill="#8a8a8a"/><circle cx="5.5" cy="11.5" r="5.2" fill="#8a8a8a"/><circle cx="5.5" cy="11.5" r="1.6" fill="#202020"/></svg>
<svg class="a" style="left:546px;top:6px" width="21" height="19" viewBox="0 0 21 19"><rect x="4.5" y="0" width="5.5" height="7" fill="#21b321"/><rect x="11" y="9.5" width="9.5" height="5.5" fill="#21b321"/><circle cx="7.2" cy="12" r="6.5" fill="#21b321"/><circle cx="7.2" cy="12" r="1.8" fill="#e8f8e8"/></svg>
<svg class="a" style="left:587px;top:6px" width="21" height="21" viewBox="0 0 21 21"><rect x="0" y="0" width="21" height="21" fill="#e23b3b"/><ellipse cx="10.5" cy="12.5" rx="5.5" ry="6" fill="#f6e8e8"/><ellipse cx="10.5" cy="6" rx="3" ry="2.2" fill="#f6e8e8"/><path d="M6 1.5L8.5 4.5M15 1.5L12.5 4.5" stroke="#f6e8e8" stroke-width="1.1"/><circle cx="8.5" cy="11.5" r="1.3" fill="#e23b3b"/><circle cx="12.5" cy="12.5" r="1.5" fill="#e23b3b"/><circle cx="9.5" cy="15.5" r="1.2" fill="#e23b3b"/></svg>
<svg class="a" style="left:630px;top:6px" width="17" height="19" viewBox="0 0 17 19"><path d="M1 1V8.5L6 5Z M1 10.5V18L6 14.5Z" fill="#dcc8c8"/><path d="M1 1V8.5M1 10.5V18" stroke="#e8e8e8" stroke-width="1.6"/><path d="M7.5 4.5A6 5 0 0 1 7.5 14.5" fill="none" stroke="#d68a9a" stroke-width="1.3"/></svg>
<svg class="a" style="left:670px;top:6px" width="19" height="19" viewBox="0 0 19 19"><rect x="0.8" y="0.8" width="17.4" height="17.4" fill="#0c1a24" stroke="#2fa0d0" stroke-width="1.3"/><text x="3" y="13" font-size="10" font-family="Liberation Sans" fill="#38b8e8">Ps</text></svg>
<div class="a" style="left:704.5px;top:31px;width:34.5px;height:2px;background:#9fc9ef"></div>
<svg class="a" style="left:711px;top:6px" width="20" height="20" viewBox="0 0 20 20"><ellipse cx="10" cy="10" rx="9.2" ry="9.6" fill="#e0242f"/><ellipse cx="10" cy="10" rx="3.6" ry="7" fill="#0b1117"/></svg>
<div class="a" style="left:746px;top:31px;width:34px;height:2px;background:#9fc9ef"></div>
<svg class="a" style="left:753px;top:6px" width="23" height="22" viewBox="0 0 23 22"><circle cx="9.5" cy="10" r="9" fill="#2ea6de"/><path d="M3.5 9.5L15 5L12.5 14L9.5 11.5Z" fill="#f4f8fc"/><rect x="8" y="13" width="13.5" height="8.5" rx="2" fill="#8c8c8c"/><text x="14.7" y="20" text-anchor="middle" font-size="7" font-family="Liberation Sans" fill="#f0f0f0">800</text></svg>
<div class="a" style="left:787px;top:31px;width:35px;height:2px;background:#9fc9ef"></div>
<svg class="a" style="left:794px;top:6px" width="20" height="20" viewBox="0 0 20 20"><circle cx="6" cy="6" r="5.5" fill="#1fa3e6"/><circle cx="14" cy="14" r="5.5" fill="#1fa3e6"/><circle cx="10" cy="10" r="8" fill="#1fa3e6"/><text x="10" y="14.6" text-anchor="middle" font-size="13" font-weight="bold" font-family="Liberation Sans" fill="#fff">S</text></svg>
<svg class="a" style="left:1102px;top:13px" width="13" height="7" viewBox="0 0 13 7"><path d="M0.7 6.2L6.5 0.8L12.3 6.2" fill="none" stroke="#e0e0e0" stroke-width="1.1"/></svg>
<svg class="a" style="left:1129px;top:10px" width="13" height="14" viewBox="0 0 13 14"><circle cx="5.8" cy="6" r="5.6" fill="#3ec4c4"/><text x="5.8" y="9.3" text-anchor="middle" font-size="9" font-weight="bold" font-family="Liberation Sans" fill="#0a2a2a">e</text><circle cx="10" cy="10.5" r="3" fill="#1a7fd0"/><path d="M10 9.5V12" stroke="#fff" stroke-width="1"/></svg>
<span class="a" style="left:1154px;top:12.3px;font-size:10.4px;color:#f0f0f0;transform:scaleX(0.86);transform-origin:0 0">ENG</span>
<span class="a" style="left:1195.5px;top:3.5px;font-size:10.8px;color:#f0f0f0;transform:scaleX(0.86);transform-origin:0 0">16:19</span>
<span class="a" style="left:1183.5px;top:18.4px;font-size:10.8px;color:#f0f0f0;transform:scaleX(0.87);transform-origin:0 0">07.11.2021</span>
<svg class="a" style="left:1245px;top:9px" width="15" height="15" viewBox="0 0 15 15"><path d="M0.5 0.5H14.5V11H8.5L7 13L5.5 11H0.5Z" fill="#f4f4f4"/><path d="M3 3.5H12M3 5.8H12M3 8H9" stroke="#9a9a9a" stroke-width="0.9"/></svg>
<div class="a" style="left:1276px;top:0;width:1px;height:33px;background:#4a4e52"></div>
</div>
</body></html>
